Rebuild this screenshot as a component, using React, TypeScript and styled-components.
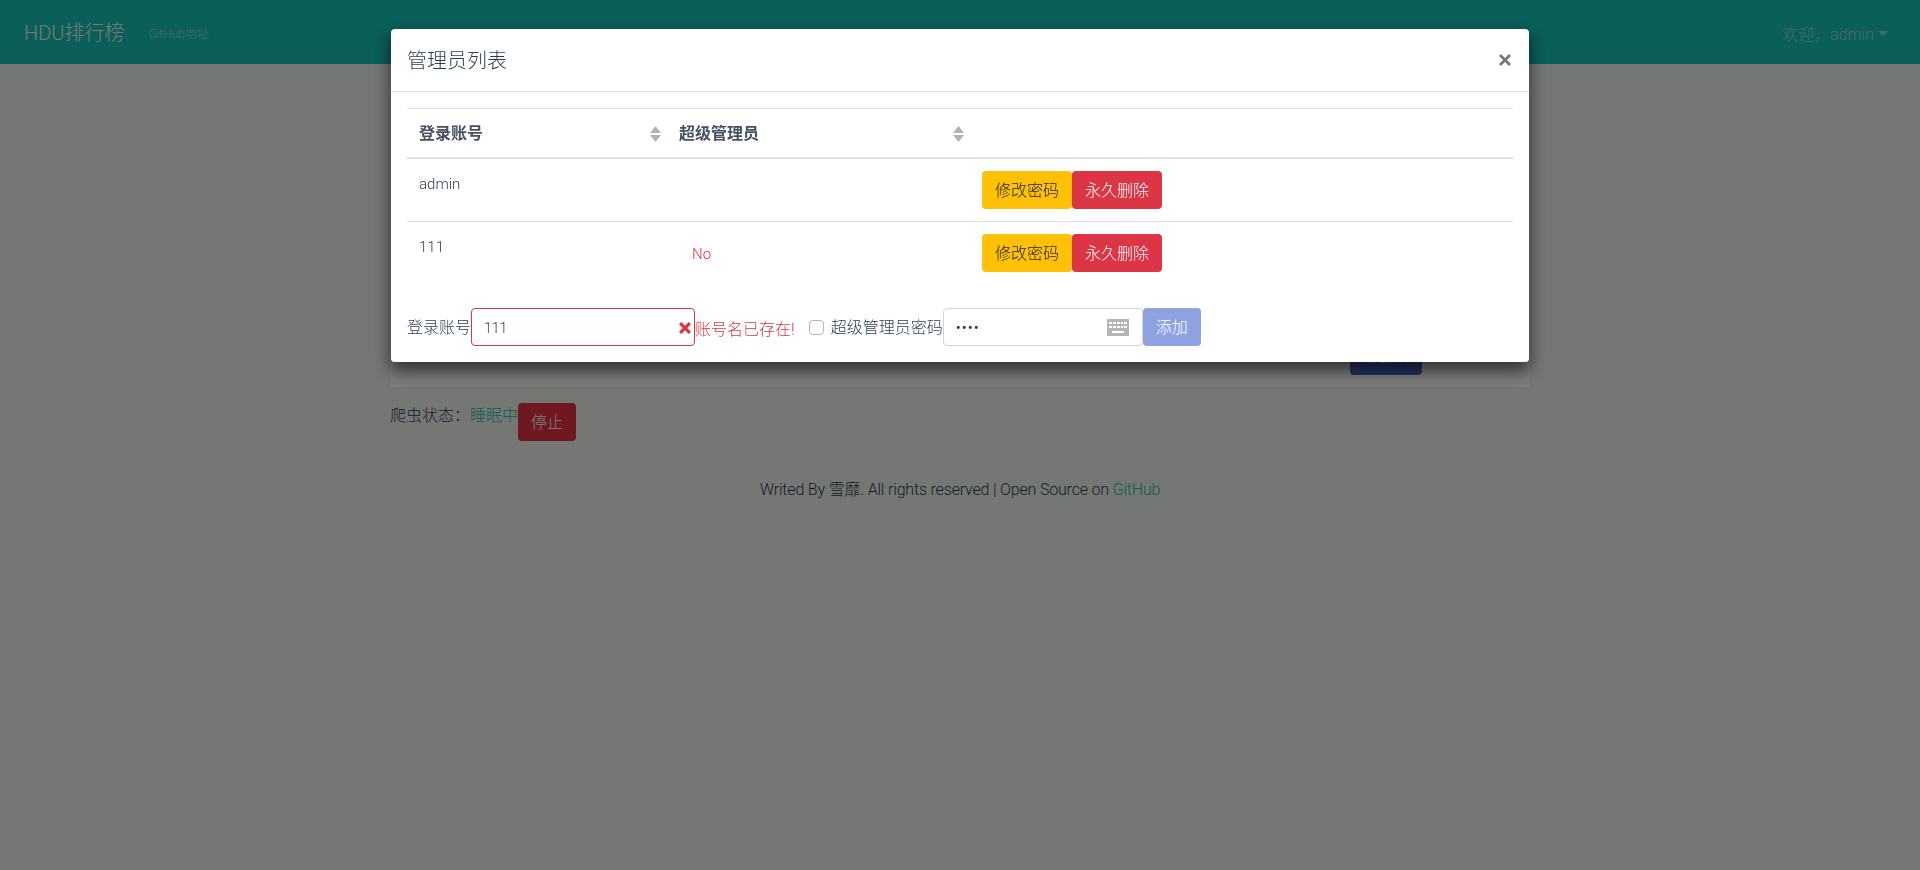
import React from 'react';
import styled, { createGlobalStyle } from 'styled-components';

const GlobalStyle = createGlobalStyle`
    html, body {
        margin: 0;
        padding: 0;
        height: 100%;
        background: #eaeeeb;
        color: #2c3e50;
        font-family: Roboto, 'Noto Sans CJK SC', sans-serif;
        font-weight: 300;
        font-size: 16px;
        line-height: 1.5;
    }
    * {
        box-sizing: border-box;
    }
`;

const Navbar = styled.nav`
    height: 64px;
    padding: 0 24px;
    display: flex;
    align-items: center;
    justify-content: space-between;
    background: #14beb2;
`;

const Brand = styled.div`
    margin-top: 2px;
    display: flex;
    align-items: center;
    gap: 24px;
`;

const BrandName = styled.span`
    font-size: 20px;
    color: #f0f0f0;
`;

const BrandLink = styled.a`
    font-size: 12px;
    color: #8fd8d2;
    margin-top: 2px;
`;

const Welcome = styled.div`
    display: flex;
    align-items: center;
    gap: 4px;
    margin-right: 8px;
    margin-top: 5px;
    color: #8fd8d2;
`;

const Caret = styled.span`
    width: 0;
    height: 0;
    margin-top: -2px;
    border-top: 5px solid #8fd8d2;
    border-left: 5px solid transparent;
    border-right: 5px solid transparent;
`;

const Main = styled.main`
    width: 1140px;
    margin: 0 auto;
`;

const Panel = styled.section`
    height: 323px;
    padding-right: 108px;
    display: flex;
    justify-content: flex-end;
    align-items: flex-end;
    background: #f9f9f9;
`;

const PanelButton = styled.button`
    width: 72px;
    height: 38px;
    margin-bottom: 12px;
    border: 0;
    border-radius: 4px;
    font: inherit;
    color: #fff;
    background: #4a66c4;
`;

const StatusRow = styled.div`
    margin-top: 16px;
    display: flex;
    align-items: flex-start;
    color: #2c3e50;
    line-height: 24px;
`;

const StatusText = styled.span`
    margin-top: 1px;
`;

const StatusValue = styled.span`
    color: #18bc9c;
`;

const Button = styled.button<{ $tone: 'warning' | 'danger' | 'primary' | 'disabled' }>`
    height: 38px;
    padding: 1px 13px 0;
    flex: none;
    border: 0;
    border-radius: 4px;
    font: inherit;
    color: ${(p) => (p.$tone === 'warning' ? '#212529' : '#fff')};
    background: ${(p) =>
        ({ warning: '#ffc107', danger: '#dc3545', primary: '#e12e41', disabled: '#8ea2e0' }[p.$tone])};
`;

const Footer = styled.footer`
    margin-top: 37px;
    text-align: center;
    letter-spacing: -0.18px;
    color: #2c3e50;
`;

const FooterLink = styled.a`
    color: #18bc9c;
`;

const Backdrop = styled.div`
    position: fixed;
    inset: 0;
    background: rgba(0, 0, 0, 0.5);
`;

const Modal = styled.div`
    width: 1140px;
    margin: 28px auto 0;
    border: 1px solid transparent;
    border-radius: 5px;
    background: #fff;
    background-clip: padding-box;
    box-shadow: 0 8px 16px rgba(0, 0, 0, 0.6);
`;

const ModalHeader = styled.header`
    height: 63px;
    padding: 0 18px 0 16px;
    display: flex;
    align-items: center;
    justify-content: space-between;
    border-bottom: 1px solid #dee2e6;
`;

const ModalTitle = styled.h5`
    margin: 2px 0 0;
    font-size: 20px;
    font-weight: 300;
    color: #2c3e50;
`;

const CloseIcon = styled.svg`
    width: 12px;
    height: 12px;
    stroke: #70767c;
    stroke-width: 2.6;
`;

const ModalBody = styled.div`
    padding: 16px;
`;

const Table = styled.div`
    border-top: 1px solid #dee2e6;
`;

const HeadRow = styled.div`
    height: 50px;
    display: grid;
    grid-template-columns: 260px 303px 1fr;
    align-items: center;
    border-bottom: 2px solid #dee2e6;
`;

const HeadCell = styled.div`
    padding: 1px 6px 0 12px;
    display: flex;
    align-items: center;
    justify-content: space-between;
    font-weight: 700;
    color: #44525f;
`;

const Row = styled.div<{ $last?: boolean }>`
    height: ${(p) => (p.$last ? '62px' : '63px')};
    padding-top: 12px;
    display: grid;
    grid-template-columns: 260px 303px 1fr;
    align-items: flex-start;
    border-bottom: ${(p) => (p.$last ? '0' : '1px solid #dee2e6')};
`;

const Cell = styled.div`
    padding: 1px 12px 0;
    font-size: 15px;
    line-height: 24px;
    color: #2c3e50;
`;

const NoCell = styled(Cell)`
    margin-top: 7px;
    padding-left: 25px;
    color: #dc3545;
`;

const Actions = styled.div`
    margin-left: 12px;
    display: flex;
`;

const Form = styled.form`
    margin-top: 24px;
    display: flex;
    align-items: center;
    line-height: 24px;
`;

const FormLabel = styled.span`
    margin-top: 2px;
    flex: none;
`;

const InputBox = styled.div<{ $invalid?: boolean }>`
    height: 38px;
    padding: 1px 12px 0;
    display: flex;
    align-items: center;
    justify-content: space-between;
    flex: none;
    font-size: 14px;
    border-radius: 4px;
    border: 1px solid ${(p) => (p.$invalid ? '#dc3545' : '#ced4da')};
    background: #fff;
`;

const AccountBox = styled(InputBox)`
    width: 224px;
    padding-right: 3px;
`;

const PasswordBox = styled(InputBox)`
    width: 200px;
    padding-right: 13px;
`;

const Dots = styled.span`
    letter-spacing: 1px;
    font-size: 15px;
    font-weight: 400;
`;

const ErrorIcon = styled.svg`
    width: 12px;
    height: 12px;
    stroke: #dc3545;
    stroke-width: 3;
`;

const ErrorText = styled.span`
    margin: 6px 4px 0 0;
    flex: none;
    color: #dc3545;
`;

const Check = styled.span`
    width: 15px;
    height: 15px;
    margin: 0 7px 0 10px;
    flex: none;
    border: 1px solid #adb5bd;
    border-radius: 4px;
`;

const KeyIcon = styled.svg`
    width: 22px;
    height: 17px;
    fill: #b5b5b5;
`;

const sortArrows = (
    <svg width="11" height="16" viewBox="0 0 11 16" fill="#b0b4b8" aria-hidden="true">
        <path d="M5.5 0 11 7H0Z" />
        <path d="M5.5 16 0 9h11Z" />
    </svg>
);

const App = () => (
    <>
        <GlobalStyle />
        <Navbar>
            <Brand>
                <BrandName>HDU排行榜</BrandName>
                <BrandLink>GitHub地址</BrandLink>
            </Brand>
            <Welcome>
                欢迎，admin
                <Caret />
            </Welcome>
        </Navbar>
        <Main>
            <Panel>
                <PanelButton>提交</PanelButton>
            </Panel>
            <StatusRow>
                <StatusText>
                    爬虫状态：<StatusValue>睡眠中</StatusValue>
                </StatusText>
                <Button $tone="primary">停止</Button>
            </StatusRow>
            <Footer>
                Writed By 雪靡. All rights reserved | Open Source on <FooterLink>GitHub</FooterLink>
            </Footer>
        </Main>

        <Backdrop>
            <Modal>
                <ModalHeader>
                    <ModalTitle>管理员列表</ModalTitle>
                    <CloseIcon viewBox="0 0 12 12">
                        <path d="M1 1l10 10M11 1L1 11" />
                    </CloseIcon>
                </ModalHeader>
                <ModalBody>
                    <Table>
                        <HeadRow>
                            <HeadCell>
                                登录账号
                                {sortArrows}
                            </HeadCell>
                            <HeadCell>
                                超级管理员
                                {sortArrows}
                            </HeadCell>
                        </HeadRow>
                        <Row>
                            <Cell>admin</Cell>
                            <Cell />
                            <Actions>
                                <Button $tone="warning">修改密码</Button>
                                <Button $tone="danger">永久删除</Button>
                            </Actions>
                        </Row>
                        <Row $last>
                            <Cell>111</Cell>
                            <NoCell>No</NoCell>
                            <Actions>
                                <Button $tone="warning">修改密码</Button>
                                <Button $tone="danger">永久删除</Button>
                            </Actions>
                        </Row>
                    </Table>
                    <Form>
                        <FormLabel>登录账号</FormLabel>
                        <AccountBox $invalid>
                            111
                            <ErrorIcon viewBox="0 0 11 11">
                                <path d="M1 1l9 9M10 1l-9 9" />
                            </ErrorIcon>
                        </AccountBox>
                        <ErrorText>账号名已存在!</ErrorText>
                        <Check />
                        <FormLabel>超级管理员密码</FormLabel>
                        <PasswordBox>
                            <Dots>••••</Dots>
                            <KeyIcon viewBox="0 0 22 17">
                                <path
                                    fillRule="evenodd"
                                    d="M0 0h22v17H0ZM2 3v2h3V3Zm4 0v2h3V3Zm4 0v2h3V3Zm4 0v2h2V3Zm3 0v2h3V3ZM2 7v2h3V7Zm4 0v2h3V7Zm4 0v2h3V7Zm4 0v2h2V7Zm3 0v2h3V7ZM5 12v2h12v-2Z"
                                />
                            </KeyIcon>
                        </PasswordBox>
                        <Button $tone="disabled">添加</Button>
                    </Form>
                </ModalBody>
            </Modal>
        </Backdrop>
    </>
);

export default App;
